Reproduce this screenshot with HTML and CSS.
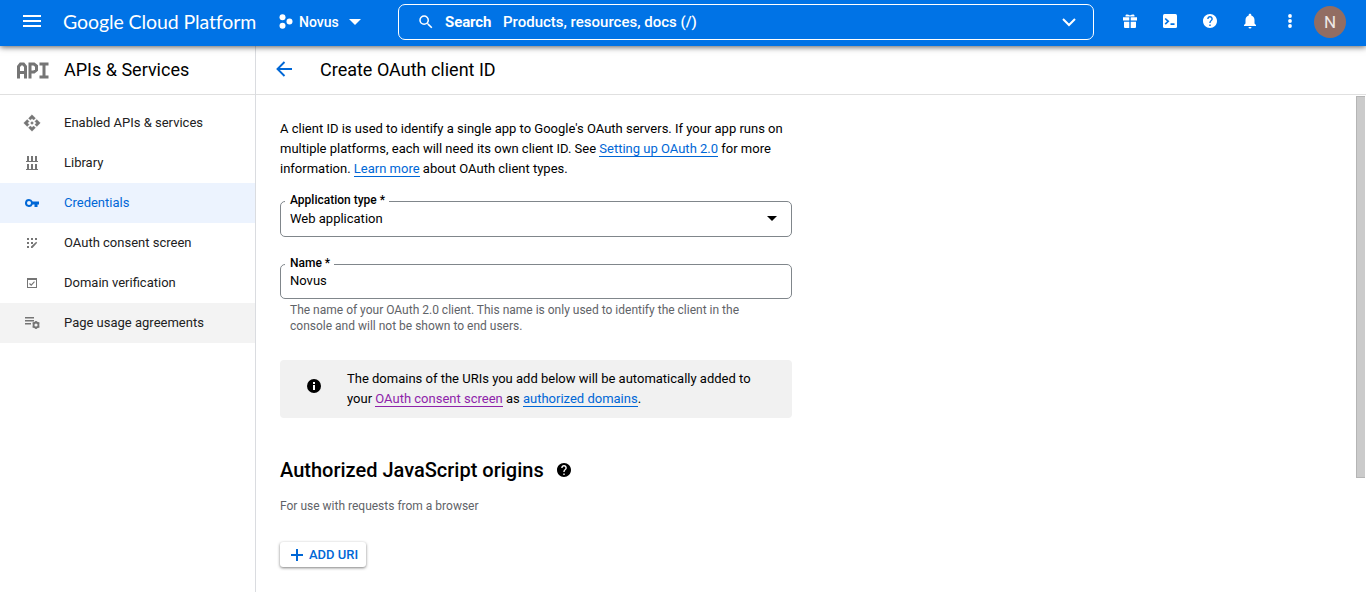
FILE: index.html
```
<!DOCTYPE html>
<html lang="en">
<head>
<meta charset="utf-8">
<title>Create OAuth client ID</title>
<link rel="stylesheet" href="styles.css">
</head>
<body>
<header class="topbar">
  <button class="icon-btn menu" aria-label="Menu"><svg width="18" height="12" viewBox="0 0 18 12"><path d="M0 0h18v2H0zM0 5h18v2H0zM0 10h18v2H0z"/></svg></button>
  <div class="brand">Google Cloud Platform</div>
  <div class="project">
    <svg width="14" height="16" viewBox="0 0 14 16"><circle cx="3.5" cy="3.2" r="3"/><circle cx="10.5" cy="7.5" r="3"/><circle cx="3.5" cy="11.7" r="3"/></svg>
    <span>Novus</span>
    <svg class="project-caret" width="12" height="6" viewBox="0 0 12 6"><path d="M0 0h12L6 6z"/></svg>
  </div>
  <div class="search">
    <svg class="search-icon" width="18" height="18" viewBox="0 0 24 24"><path d="M15.5 14h-.79l-.28-.27A6.47 6.47 0 0 0 16 9.5 6.5 6.5 0 1 0 9.5 16c1.61 0 3.09-.59 4.23-1.57l.27.28v.79l5 4.99L20.49 19l-4.99-5zm-6 0C7.01 14 5 11.99 5 9.5S7.01 5 9.500 5 14 7.010 14 9.500 11.990 14 9.500 14z"/></svg>
    <b class="search-label">Search</b>
    <span class="search-hint">Products, resources, docs (/)</span>
    <svg class="search-chevron" width="14" height="9" viewBox="0 0 14 9"><path d="M1 1l6 6 6-6" fill="none" stroke="#fff" stroke-width="2"/></svg>
  </div>
  <div class="actions">
    <svg width="14" height="14" viewBox="0 0 14 14"><path d="M0 3.300h6.300v3.200H0zM7.700 3.300H14v3.200H7.700zM1 7.700h5.300V14H2a1 1 0 0 1-1-1zM7.700 7.700H13V13a1 1 0 0 1-1 1H7.700z"/><path d="M2.500 1.600C2.500 0 5 0 7 1.500 9 0 11.500 0 11.500 1.600V2.500h-9z"/></svg>
    <svg width="14" height="14" viewBox="0 0 14 14"><rect width="14" height="14" rx="1.500"/><path d="M2.200 4.500l3 2.800-3 2.800M7.500 10.200h4" fill="none" stroke="#0073e6" stroke-width="1.700"/></svg>
    <svg width="14" height="14" viewBox="2 2 20 20"><path d="M12 2C6.480 2 2 6.480 2 12s4.480 10 10 10 10-4.480 10-10S17.520 2 12 2zm1 17h-2v-2h2v2zm2.070-7.750l-.9.920C13.450 12.900 13 13.500 13 15h-2v-.5c0-1.100.45-2.100 1.170-2.830l1.240-1.260c.37-.36.590-.86.590-1.410 0-1.100-.9-2-2-2s-2 .9-2 2H8c0-2.210 1.790-4 4-4s4 1.790 4 4c0 .88-.36 1.680-.93 2.250z"/></svg>
    <svg width="14" height="16" viewBox="0 0 14 16"><path d="M7 .8c.8 0 1.300.5 1.300 1.200v.5C10.500 3.100 11.500 5 11.500 7v3.500L13 12v1H1v-1l1.500-1.500V7c0-2 1-3.900 3.200-4.500V2C5.700 1.300 6.200.8 7 .8zM5.500 14h3a1.500 1.500 0 0 1-3 0z"/></svg>
    <svg width="14" height="14" viewBox="0 0 14 14"><circle cx="7" cy="2" r="1.900"/><circle cx="7" cy="7" r="1.900"/><circle cx="7" cy="12" r="1.900"/></svg>
  </div>
  <div class="avatar">N</div>
</header>
<div class="shell">
  <aside class="sidebar">
    <div class="side-head">
      <svg width="32" height="17" viewBox="0 0 32 17"><path d="M1.500 16.500V4.500L3.500 2h3l2 2.500v12M2 10.500h6M13 16.500V2h4l2.500 2v4L17 10h-4M22.500 2h9M22.500 15h9M27 2v13" fill="none" stroke="#757575" stroke-width="3"/></svg>
      <span class="side-title">APIs &amp; Services</span>
    </div>
    <nav class="nav">
      <a class="nav-item"><svg width="18" height="18" viewBox="0 0 24 24"><path d="M14 12l-2 2-2-2 2-2zM12 6l2.120 2.120 2.500-2.500L12 1 7.380 5.620l2.500 2.500zM6 12l2.120-2.120-2.500-2.500L1 12l4.620 4.620 2.500-2.500zM18 12l-2.120 2.120 2.500 2.500L23 12l-4.620-4.620-2.500 2.500zM12 18l-2.120-2.120-2.500 2.500L12 23l4.620-4.620-2.500-2.500z" stroke="#757575" stroke-width=".5"/></svg><span>Enabled APIs &amp; services</span></a>
      <a class="nav-item"><svg width="18" height="18" viewBox="0 0 18 18"><path d="M4 2h2v5h2V2h2v5h2V2h2v5h1v1H3V7h1zM4 10h2v5h2v-5h2v5h2v-5h2v5h1v1H3v-1h1z"/></svg><span>Library</span></a>
      <a class="nav-item active"><svg width="18" height="18" viewBox="0 0 18 18"><path fill-rule="evenodd" d="M6 5a4 4 0 0 1 3.700 2.500H16v3h-1.500V13h-3v-2.500H9.700A4 4 0 1 1 6 5zm0 2a2 2 0 1 0 0 4 2 2 0 0 0 0-4z"/></svg><span>Credentials</span></a>
      <a class="nav-item"><svg width="18" height="18" viewBox="0 0 18 18"><path d="M4 4h2v2H4zM8 4h2v2H8zM12 4h2v2h-2zM4 8h2v2H4zM8 8h2v2H8zM4 12h2v2H4zM8 12.500L13.200 7.700l1 1L9.500 14H8z"/></svg><span>OAuth consent screen</span></a>
      <a class="nav-item"><svg width="18" height="18" viewBox="0 0 18 18"><path fill-rule="evenodd" d="M4 4h10v10H4zm1 2v7h8V6z"/><path d="M6.500 9.500l1.700 1.700 3.300-3.500" fill="none" stroke="#757575" stroke-width="1.100"/></svg><span>Domain verification</span></a>
      <a class="nav-item hover"><svg width="18" height="18" viewBox="0 0 18 18"><path d="M2 3h9v1.500H2zM2 6h9v1.500H2zM2 9h6v1.500H2z"/><circle cx="13" cy="11" r="2.500" fill="none" stroke="#757575" stroke-width="1.800"/><path d="M12.200 7h1.600v1.500h-1.600zM12.200 13.500h1.600V15h-1.600zM9.200 9.300l.8-1.300 1.300.8-.8 1.300zM16.800 9.300L16 8l-1.300.8.8 1.300zM9.200 12.700l.8 1.300 1.300-.8-.8-1.300zM16.800 12.700L16 14l-1.300-.8.8-1.300z"/></svg><span>Page usage agreements</span></a>
    </nav>
  </aside>
  <main class="main">
    <div class="page-head">
      <svg class="back" width="16" height="16" viewBox="0 0 16 16"><path d="M8.500 1L1.500 8l7 7M1.500 8H16" fill="none" stroke="#0067d6" stroke-width="1.900"/></svg>
      <h1 class="page-title">Create OAuth client ID</h1>
    </div>
    <div class="content">
      <p class="intro">A client ID is used to identify a single app to Google's OAuth servers. If your app runs on<br>multiple platforms, each will need its own client ID. See <a class="link">Setting up OAuth 2.0</a> for more<br>information. <a class="link">Learn more</a> about OAuth client types.</p>
      <div class="field field-type"><span class="field-label">Application type *</span><span class="field-value">Web application</span><svg class="field-caret" width="10" height="5" viewBox="0 0 10 5"><path d="M0 0h10L5 5z"/></svg></div>
      <div class="field field-name"><span class="field-label">Name *</span><span class="field-value">Novus</span></div>
      <p class="help">The name of your OAuth 2.0 client. This name is only used to identify the client in the<br>console and will not be shown to end users.</p>
      <div class="notice">
        <svg width="14" height="14" viewBox="0 0 14 14"><circle cx="7" cy="7" r="7"/><path d="M6 3h2v2H6zM6 6h2v5H6z" fill="#fff"/></svg>
        <p class="notice-text">The domains of the URIs you add below will be automatically added to<br>your <a class="link visited">OAuth consent screen</a> as <a class="link">authorized domains</a>.</p>
      </div>
      <div class="section-head"><h2 class="section-title">Authorized JavaScript origins</h2><svg width="14" height="14" viewBox="2 2 20 20"><path d="M12 2C6.480 2 2 6.480 2 12s4.480 10 10 10 10-4.480 10-10S17.520 2 12 2zm1 17h-2v-2h2v2zm2.070-7.750l-.9.920C13.450 12.900 13 13.500 13 15h-2v-.5c0-1.100.45-2.100 1.170-2.830l1.240-1.260c.37-.36.590-.86.590-1.410 0-1.100-.9-2-2-2s-2 .9-2 2H8c0-2.210 1.790-4 4-4s4 1.790 4 4c0 .88-.36 1.680-.93 2.250z"/></svg></div>
      <p class="section-sub">For use with requests from a browser</p>
      <button class="add"><svg width="12" height="12" viewBox="0 0 12 12"><path d="M5 0h2v5h5v2H7v5H5V7H0V5h5z"/></svg><span>ADD URI</span></button>
    </div>
    <div class="scroll-thumb"></div>
  </main>
</div>
</body>
</html>
```
FILE: styles.css
```
* { box-sizing: border-box; }
body {
  margin: 0;
  height: 592px;
  overflow: hidden;
  background: #fff;
  color: #000;
  font: 13px/20px Roboto, sans-serif;
  white-space: nowrap;
}
svg { display: block; flex: none; fill: currentColor; }
p, h1, h2 { margin: 0; font-weight: 400; }
button { font: inherit; border: 0; background: none; padding: 0; }

.topbar {
  position: relative;
  z-index: 1;
  display: flex;
  align-items: center;
  height: 46px;
  padding-left: 23px;
  padding-bottom: 2px;
  background: #0073e6;
  color: #fff;
  box-shadow: 0 1px 6px rgba(0, 0, 0, .65);
}
.icon-btn { color: #fff; }
.menu { width: 40px; padding-bottom: 2px; }
.brand { width: 216px; font: 19.500px/24px Lato, sans-serif; letter-spacing: -.1px; }
.project { display: flex; align-items: center; width: 119px; font-size: 14px; font-weight: 500; }
.project span { margin: 0 10px 0 6px; }
.search {
  display: flex;
  align-items: center;
  width: 696px;
  height: 36px;
  padding: 0 17px 0 18px;
  border: 1px solid #fff;
  border-radius: 7px;
  font-size: 15px;
}
.search-label { width: 58px; margin-left: 10px; font-weight: 700; letter-spacing: -.1px; }
.search-hint { font-weight: 500; }
.search-chevron { margin-left: auto; }
.actions { display: flex; align-items: center; gap: 26px; margin-left: 29px; padding-bottom: 2px; }
.avatar {
  width: 32px;
  height: 32px;
  margin-left: 17px;
  border-radius: 50%;
  background: #926d62;
  color: #eee8e6;
  text-align: center;
  font-size: 17px;
  line-height: 33px;
}

.shell { display: flex; height: 546px; }
.sidebar { width: 256px; border-right: 1px solid #dadce0; }
.side-head {
  display: flex;
  align-items: center;
  height: 49px;
  padding-left: 17px;
  border-bottom: 1px solid #e0e0e0;
}
.side-title { margin-left: 15px; font-size: 18px; }
.nav { padding-top: 8px; }
.nav-item {
  display: flex;
  align-items: center;
  gap: 23px;
  height: 40px;
  padding-left: 23px;
  color: #212121;
}
.nav-item svg { color: #757575; }
.nav-item.active, .nav-item.active svg { background: #ecf3fe; color: #0067d6; }
.nav-item.hover { background: #f3f3f3; }

.main { position: relative; flex: 1; }
.page-head {
  display: flex;
  align-items: center;
  height: 49px;
  padding-left: 20px;
  border-bottom: 1px solid #e0e0e0;
}
.back { margin-bottom: 2px; }
.page-title { margin-left: 28px; font-size: 18px; }
.content { width: 536px; padding: 24px 0 0 24px; }
.link { color: #0067d6; border-bottom: 1px solid #0067d6; }
.visited { color: #8e24aa; border-color: #8e24aa; }
.field {
  position: relative;
  display: flex;
  align-items: center;
  justify-content: space-between;
  padding: 0 14px 0 9px;
  border: 1px solid #80868b;
  border-radius: 5px;
}
.field-type { height: 36px; margin-top: 22px; }
.field-name { height: 35px; margin-top: 27px; padding-bottom: 2px; }
.field-caret { margin-bottom: 1px; }
.field-label {
  position: absolute;
  top: -10px;
  left: 4px;
  padding: 0 4px 0 5px;
  background: #fff;
  font-size: 12px;
  font-weight: 500;
  line-height: 16px;
}
.help { margin: 3px 0 0 10px; color: #5f6368; font-size: 12px; line-height: 16px; }
.notice {
  display: flex;
  height: 58px;
  margin-top: 26px;
  padding: 9px 27px;
  border-radius: 4px;
  background: #f1f1f1;
}
.notice svg { margin-top: 10px; }
.notice-text { margin-left: 26px; }
.section-head { display: flex; align-items: center; gap: 13px; margin-top: 40px; }
.section-title { font-size: 20px; font-weight: 500; line-height: 24px; }
.section-sub { margin-top: 14px; color: #5f6368; font-size: 12px; }
.add {
  display: flex;
  align-items: center;
  gap: 6px;
  width: 86px;
  height: 25px;
  margin-top: 26px;
  padding-left: 11px;
  border-radius: 3px;
  color: #0067d6;
  font-weight: 500;
  box-shadow: 0 1px 3px rgba(0, 0, 0, .5);
}
.scroll-thumb {
  position: absolute;
  top: 50px;
  right: 1px;
  width: 9px;
  height: 382px;
  background: #cbcbcb;
  border: 1px solid #b5b5b5;
  border-right: 0;
}
```
